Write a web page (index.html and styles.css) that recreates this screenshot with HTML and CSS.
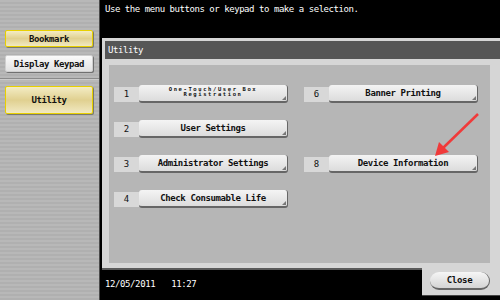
FILE: index.html
```html
<!DOCTYPE html>
<html lang="en">
<head>
    <meta charset="UTF-8">
    <title>Utility</title>
    <link rel="stylesheet" href="styles.css">
</head>
<body>
    <div class="screen">
        <div class="sidebar">
            <div class="side-btn yellow">Bookmark</div>
            <div class="side-btn white">Display Keypad</div>
            <div class="side-sep"></div>
            <div class="side-btn yellow tall">Utility</div>
        </div>
        <div class="main">
            <div class="message">Use the menu buttons or keypad to make a selection.</div>
            <div class="frame">
                <div class="header">Utility</div>
                <div class="panel">
                    <div class="menu">
                        <div class="item"><span class="num">1</span><span class="btn small">One-Touch/User Box<br>Registration</span></div>
                        <div class="item"><span class="num">6</span><span class="btn">Banner Printing</span></div>
                        <div class="item"><span class="num">2</span><span class="btn">User Settings</span></div>
                        <div class="item"></div>
                        <div class="item"><span class="num">3</span><span class="btn">Administrator Settings</span></div>
                        <div class="item"><span class="num">8</span><span class="btn">Device Information</span></div>
                        <div class="item"><span class="num">4</span><span class="btn">Check Consumable Life</span></div>
                    </div>
                </div>
            </div>
            <div class="bottom">
                <div class="status"><span>12/05/2011</span><span>11:27</span></div>
                <div class="close-area"><div class="close">Close</div></div>
            </div>
        </div>
        <svg class="arrow" width="500" height="300" viewBox="0 0 500 300">
            <line x1="478" y1="114" x2="443" y2="148" stroke="#f03a3a" stroke-width="2.5"/>
            <polygon points="435,156 439,142 449,152" fill="#f03a3a"/>
        </svg>
    </div>
</body>
</html>
```

FILE: styles.css
```css
body {
    margin: 0;
    padding: 0;
    background-color: #000;
    font-family: "DejaVu Sans Mono", monospace;
}

.screen {
    position: relative;
    width: 500px;
    height: 300px;
    display: flex;
    overflow: hidden;
}

.sidebar {
    width: 100px;
    height: 300px;
    box-sizing: border-box;
    padding-top: 30px;
    border-right: 1px solid #4a4a4a;
    background: repeating-linear-gradient(to bottom, #b8b8b8 0, #b8b8b8 2px, #b0b0b0 2px, #b0b0b0 4px);
    display: flex;
    flex-direction: column;
}

.side-btn {
    width: 88px;
    height: 17px;
    margin-left: 5px;
    box-sizing: border-box;
    border-radius: 2px;
    display: flex;
    justify-content: center;
    align-items: center;
    font-size: 9px;
    font-weight: bold;
    letter-spacing: -0.4px;
    color: #111;
}

.side-btn.yellow {
    border: 1px solid #e8d000;
    background: linear-gradient(to bottom, #f3ecc4, #e0d090 50%, #f1e9c2);
    box-shadow: 1px 1px 0 #7a7a6a;
}

.side-btn.white {
    margin-top: 8px;
    border: 1px solid #cfcfcf;
    background: linear-gradient(to bottom, #fafafa, #e2e2e2);
    box-shadow: 1px 1px 0 #707070;
}

.side-btn.tall {
    height: 28px;
}

.side-sep {
    height: 1px;
    margin: 6px 0 6px 0;
    background-color: #8a8a8a;
    border-bottom: 1px solid #cacaca;
}

.main {
    flex: 1;
    display: flex;
    flex-direction: column;
    border-left: 2px solid #000;
}

.message {
    height: 38px;
    box-sizing: border-box;
    padding: 4px 0 0 3px;
    color: #fff;
    font-size: 9px;
    letter-spacing: -0.45px;
}

.frame {
    height: 232px;
    box-sizing: border-box;
    padding: 3px 0 5px 3px;
    background-color: #d6d6d6;
    border-bottom: 2px solid #5a5a5a;
    display: flex;
    flex-direction: column;
}

.header {
    height: 18px;
    box-sizing: border-box;
    padding: 4px 0 0 3px;
    background-color: #565656;
    color: #fff;
    font-size: 9px;
    letter-spacing: -0.4px;
}

.panel {
    flex: 1;
    margin: 6px 10px 0 4px;
    background-color: #b6b6b6;
    padding: 20px 0 0 5px;
}

.menu {
    display: grid;
    grid-template-columns: 174px 174px;
    column-gap: 16px;
    row-gap: 17px;
}

.item {
    height: 18px;
    display: flex;
    align-items: center;
}

.num {
    width: 25px;
    height: 15px;
    background-color: #d8d8d8;
    display: flex;
    justify-content: center;
    align-items: center;
    font-size: 9px;
    color: #111;
}

.btn {
    position: relative;
    width: 149px;
    height: 18px;
    box-sizing: border-box;
    border-radius: 3px;
    border-right: 1px solid #666;
    border-bottom: 2px solid #666;
    background: linear-gradient(to bottom, #f4f4f4, #dcdcdc);
    display: flex;
    justify-content: center;
    align-items: center;
    text-align: center;
    font-size: 9px;
    font-weight: bold;
    letter-spacing: -0.4px;
    color: #111;
}

.btn::after {
    content: "";
    position: absolute;
    right: 1px;
    bottom: 1px;
    border-left: 4px solid transparent;
    border-bottom: 4px solid #777;
}

.btn.small {
    font-size: 5.5px;
    line-height: 5.5px;
    letter-spacing: 1.6px;
    padding-bottom: 2px;
}

.bottom {
    flex: 1;
    display: flex;
}

.status {
    flex: 1;
    padding: 9px 0 0 3px;
    color: #fff;
    font-size: 9px;
    letter-spacing: -0.4px;
    display: flex;
    gap: 16px;
}

.close-area {
    width: 78px;
    margin-top: -2px;
    margin-bottom: 4px;
    background-color: #d6d6d6;
    border-bottom: 1px solid #444;
    padding: 4px 0 0 8px;
    box-sizing: border-box;
}

.close {
    width: 60px;
    height: 18px;
    box-sizing: border-box;
    border-radius: 9px;
    border-right: 1px solid #666;
    border-bottom: 2px solid #666;
    background: linear-gradient(to bottom, #f6f6f6, #d4d4d4);
    display: flex;
    justify-content: center;
    align-items: center;
    font-size: 9px;
    font-weight: bold;
    letter-spacing: -0.3px;
    color: #111;
}

.arrow {
    position: absolute;
    left: 0;
    top: 0;
    pointer-events: none;
}
```
